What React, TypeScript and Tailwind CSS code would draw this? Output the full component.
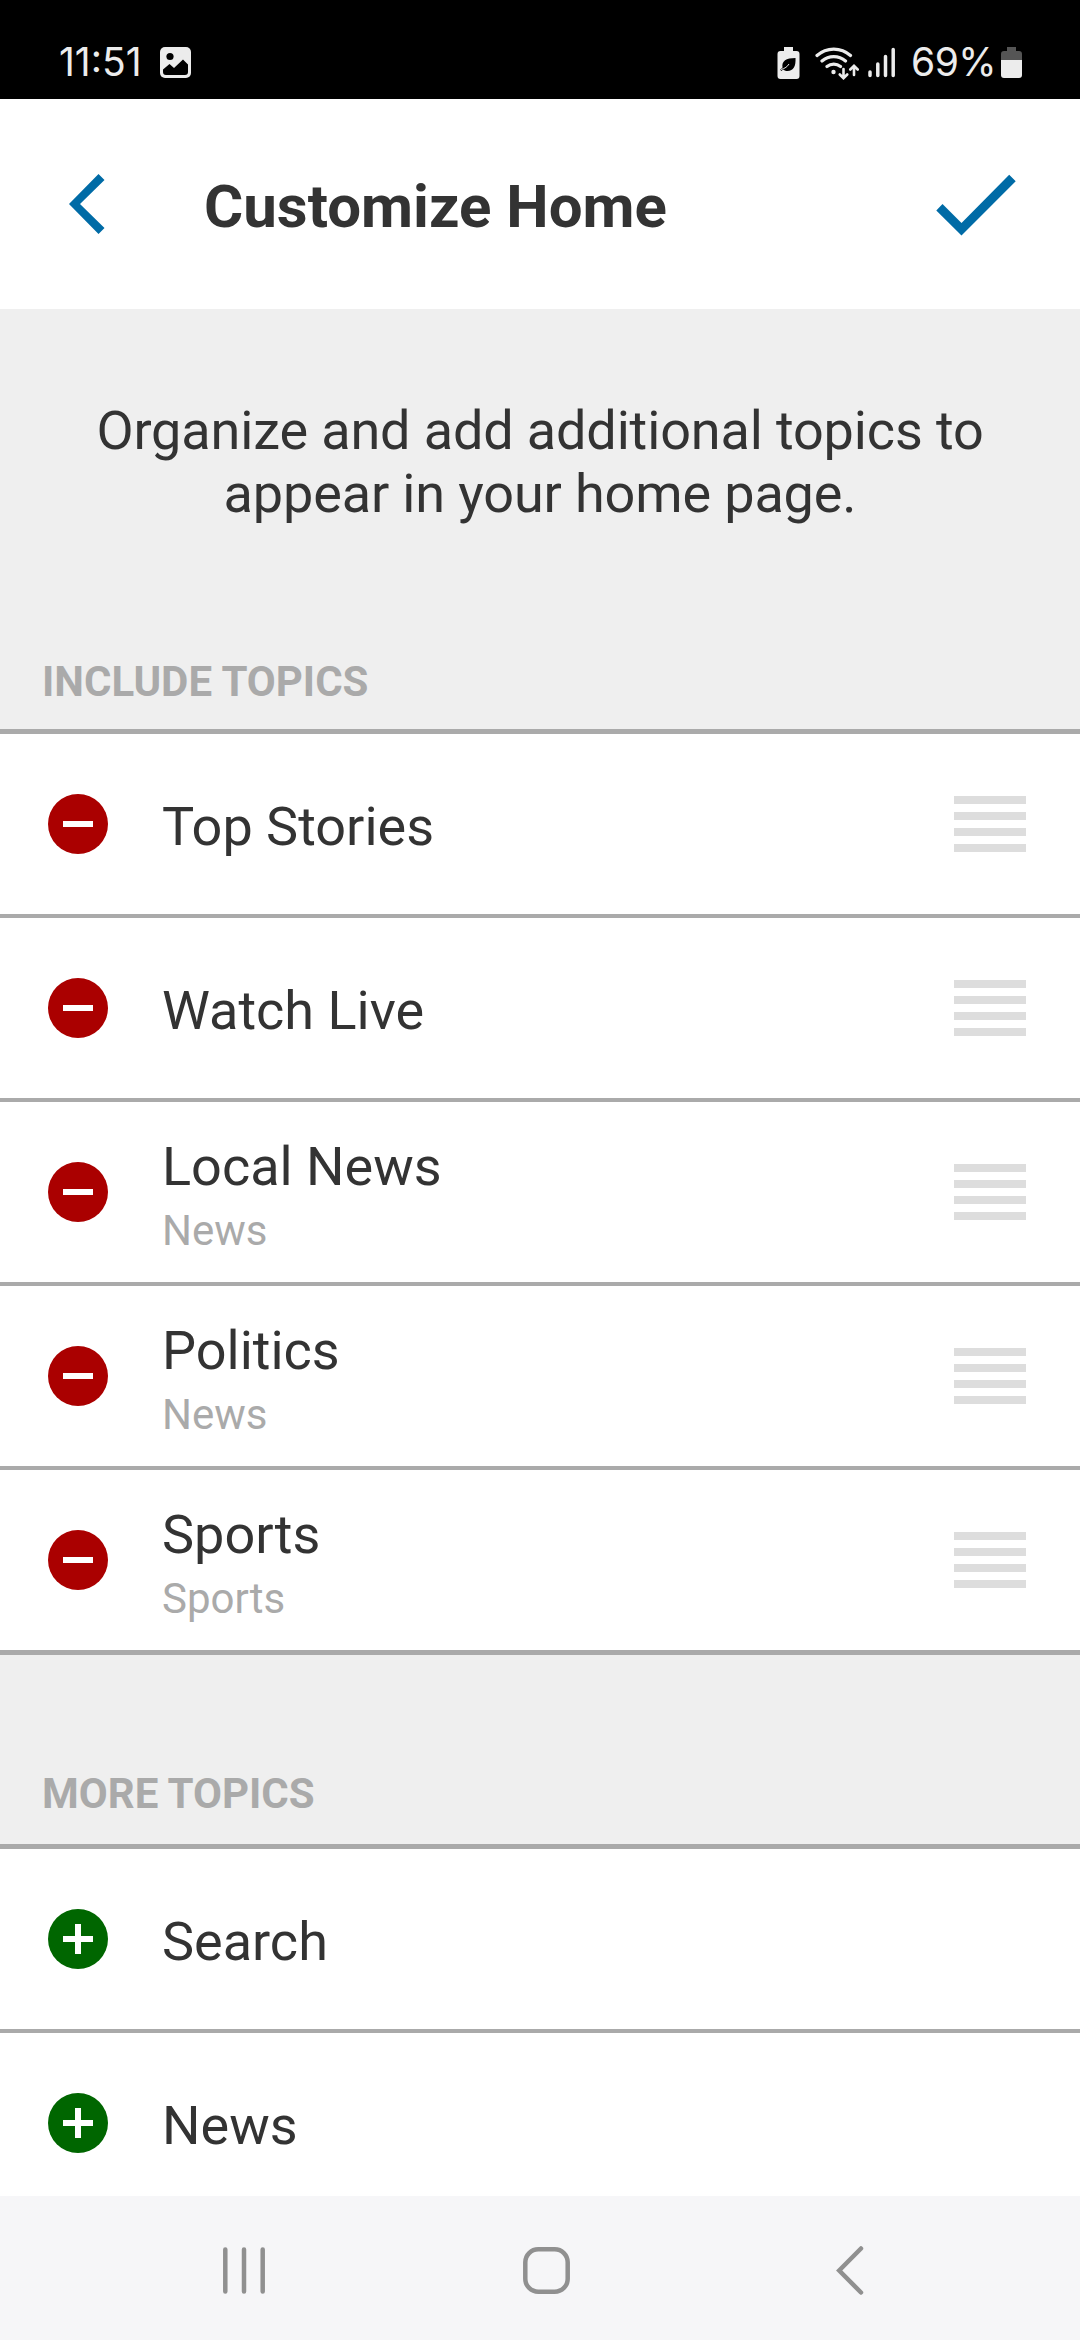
import React, { useState } from 'react';

interface Topic {
    name: string;
    parent?: string;
}

const includedTopics: Topic[] = [
    { name: 'Top Stories' },
    { name: 'Watch Live' },
    { name: 'Local News', parent: 'News' },
    { name: 'Politics', parent: 'News' },
    { name: 'Sports', parent: 'Sports' },
];

const moreTopics: Topic[] = [{ name: 'Search' }, { name: 'News' }];

const StatusBar: React.FC = () => (
    <div className="h-[99px] shrink-0 bg-black text-[#ececec] flex items-start pt-[44px] pl-[59px] pr-[58px] font-['Inter',sans-serif] text-[39px] leading-[36px]">
        <span className="w-[101px] whitespace-nowrap">11:51</span>
        {/* Picture notification */}
        <svg className="mt-[3px]" width="31" height="31" viewBox="0 0 31 31">
            <rect width="31" height="31" rx="5" fill="#ececec" />
            <circle cx="10" cy="9.5" r="3.6" fill="#000" />
            <path d="M3 22.5L9.5 17l4.5 4L23 12.5l5 5V25a3 3 0 0 1-3 3H6a3 3 0 0 1-3-3z" fill="#000" />
        </svg>
        <div className="ml-auto flex items-start">
            {/* Power saving */}
            <svg className="mt-[3px] mr-[15px]" width="23" height="32" viewBox="0 0 23 32">
                <path d="M7 0h9v4h3.500a3 3 0 0 1 3 3v22a3 3 0 0 1-3 3H3.500a3 3 0 0 1-3-3V7a3 3 0 0 1 3-3H7z" fill="#ececec" />
                <path d="M18.500 11c.5 8-2 13-8 13-2 0-3.500-.6-4.500-1.500l-1.500 1.500-1.300-1.200 2.300-2.300C4.500 14 9 11 18.500 11z" fill="#000" />
                <path d="M4 22.500c4-1 6.500-3 8-5.500" stroke="#ececec" strokeWidth="1" fill="none" />
            </svg>
            <svg className="mt-[2px] mr-[9px]" width="44" height="34" viewBox="0 0 44 34" fill="none" stroke="#ececec" strokeWidth="3.200" strokeLinecap="round">
                <path d="M2 9.500a25 25 0 0 1 33.500 0M7 15a18 18 0 0 1 23.500 0M12 20.500a11 11 0 0 1 13.500 0" />
                <circle cx="18.500" cy="26" r="2.200" fill="#ececec" stroke="none" />
                <path d="M28.500 23v9M24.800 28.500l3.700 3.700 3.700-3.700M39 29v-9M35.300 23.500l3.700-3.700 3.700 3.700" strokeWidth="2.600" />
            </svg>
            <svg className="mt-[3px] mr-[15px]" width="28" height="31" viewBox="0 0 28 31" fill="none" stroke="#ececec" strokeWidth="3.500" strokeLinecap="round">
                <path d="M2 25v3.500M9.800 17v11.500M17.500 9.500v19M25.200 2.500v26" />
            </svg>
            <span className="w-[90px] whitespace-nowrap tracking-[-0.5px]">69%</span>
            <svg className="mt-[3px]" width="21" height="32" viewBox="0 0 21 32">
                <path d="M6 0h9v4h3a3 3 0 0 1 3 3v6H0V7a3 3 0 0 1 3-3h3z" fill="#555" />
                <path d="M0 13h21v15a3 3 0 0 1-3 3H3a3 3 0 0 1-3-3z" fill="#ececec" />
            </svg>
        </div>
    </div>
);

const Header: React.FC = () => (
    <header className="h-[210px] shrink-0 bg-white flex items-start pl-[69px] pr-[64px] text-[#006ba6]">
        <button className="mt-[75px]">
            <svg width="36" height="60" viewBox="0 0 36 60" fill="currentColor">
                <path d="M0 30L29.500 0l6 6L11 30l24.500 24-6 6z" />
            </svg>
        </button>
        <h1 className="mt-[72px] ml-[99px] text-[60px] leading-[71px] font-bold text-[#333]">Customize Home</h1>
        <button className="mt-[75px] ml-auto">
            <svg width="80" height="62" viewBox="0 0 80 62" fill="currentColor">
                <path d="M.3 36.500L6.500 30l19 19L73.200.8l6.500 6.500-54.200 54.200z" />
            </svg>
        </button>
    </header>
);

const SectionTitle: React.FC<{ children: React.ReactNode }> = ({ children }) => (
    <h2 className="pl-[42px] text-[42px] leading-[50px] font-bold uppercase text-[#aaa]">{children}</h2>
);

const TopicRow: React.FC<{ topic: Topic; included?: boolean; onToggle: () => void }> = ({ topic, included, onToggle }) => (
    <li className="h-[180px] shrink-0 bg-white flex items-center pl-12 pr-[54px]">
        <button onClick={onToggle} className={included ? 'text-[#a00]' : 'text-[#060]'}>
            <svg width="60" height="60" viewBox="0 0 60 60">
                <circle cx="30" cy="30" r="30" fill="currentColor" />
                <path d={included ? 'M15 30h30' : 'M15 30h30M30 15v30'} stroke="#fff" strokeWidth="6" />
            </svg>
        </button>
        <div className={`ml-[54px] flex-1 ${topic.parent ? 'pt-[13px]' : 'pt-1.5'}`}>
            <div className="text-[54px] leading-[64px] text-[#333]">{topic.name}</div>
            {topic.parent && <div className="text-[42px] leading-[64px] text-[#aaa]">{topic.parent}</div>}
        </div>
        {included && (
            <div className="w-[72px] flex flex-col gap-2">
                <div className="h-2 bg-[#ddd]" />
                <div className="h-2 bg-[#ddd]" />
                <div className="h-2 bg-[#ddd]" />
                <div className="h-2 bg-[#ddd]" />
            </div>
        )}
    </li>
);

const NavBar: React.FC = () => (
    <nav className="h-36 shrink-0 bg-[#f6f6f8] flex items-center justify-between pl-[223px] pr-[216px] pt-1 text-[#909090]">
        <svg width="42" height="47" viewBox="0 0 42 47" stroke="currentColor" strokeWidth="4.500" strokeLinecap="round">
            <path d="M2.300 2.500v42M21 2.500v42M39.700 2.500v42" />
        </svg>
        <svg className="mr-[9px]" width="47" height="47" viewBox="0 0 47 47" fill="none" stroke="currentColor" strokeWidth="4.500">
            <rect x="2.300" y="2.300" width="42.400" height="42.400" rx="13" />
        </svg>
        <svg width="28" height="49" viewBox="0 0 28 49" fill="none" stroke="currentColor" strokeWidth="4.500" strokeLinecap="round">
            <path d="M25 2.500L3.200 24.500 25 46.500" />
        </svg>
    </nav>
);

export default function App() {
    const [included, setIncluded] = useState<Topic[]>(includedTopics);
    const [more, setMore] = useState<Topic[]>(moreTopics);

    const removeTopic = (topic: Topic) => {
        setIncluded(prev => prev.filter(t => t !== topic));
        setMore(prev => [...prev, topic]);
    };

    const addTopic = (topic: Topic) => {
        setMore(prev => prev.filter(t => t !== topic));
        setIncluded(prev => [...prev, topic]);
    };

    return (
        <div className="w-[1080px] h-[2340px] overflow-hidden flex flex-col bg-[#efefef] font-['Roboto',sans-serif]">
            <StatusBar />
            <Header />
            <main className="flex-1 min-h-0 overflow-hidden flex flex-col">
                <div className="h-[420px] shrink-0 flex flex-col justify-between pb-[22px]">
                    <p className="pt-[90px] text-center text-[54px] leading-[63px] tracking-[-0.14px] text-[#333]">
                        Organize and add additional topics to
                        <br />
                        appear in your home page.
                    </p>
                    <SectionTitle>Include Topics</SectionTitle>
                </div>
                <ul className="shrink-0 border-y-[5px] border-[#aaa] bg-[#aaa] flex flex-col gap-1">
                    {included.map(topic => (
                        <TopicRow key={topic.name} topic={topic} included onToggle={() => removeTopic(topic)} />
                    ))}
                </ul>
                <div className="h-[189px] shrink-0 flex flex-col justify-end pb-[25px]">
                    <SectionTitle>More Topics</SectionTitle>
                </div>
                <ul className="shrink-0 border-y-[5px] border-[#aaa] bg-[#aaa] flex flex-col gap-1">
                    {more.map(topic => (
                        <TopicRow key={topic.name} topic={topic} onToggle={() => addTopic(topic)} />
                    ))}
                </ul>
            </main>
            <NavBar />
        </div>
    );
}
